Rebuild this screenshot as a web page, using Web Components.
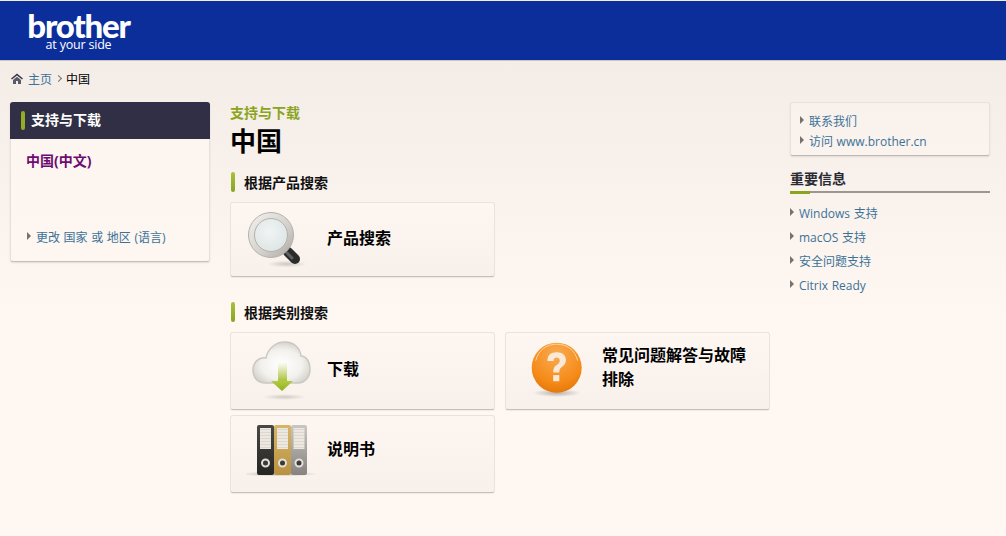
<!DOCTYPE html>
<html lang="zh-CN">
<head>
<meta charset="utf-8">
<title>Brother 支持与下载</title>
<style>
  html, body { margin: 0; height: 100%; }
  body {
    background: linear-gradient(#f3ece7 60px, #fff7f2 320px);
    font-family: "Open Sans", "Noto Sans CJK SC", sans-serif;
    font-size: 12px;
    color: #000;
    overflow: hidden;
  }
</style>
</head>
<body>
<site-header></site-header>
<bread-crumb current="中国">主页</bread-crumb>

<page-columns>
  <side-panel slot="left" title="支持与下载">
    <strong>中国(中文)</strong>
    <arrow-link slot="foot">更改 国家 或 地区 (语言)</arrow-link>
  </side-panel>

  <div slot="main">
    <page-title eyebrow="支持与下载">中国</page-title>

    <section-head gap="13">根据产品搜索</section-head>
    <card-grid>
      <nav-card h="75" lift="3">
        <svg slot="icon" width="70" height="66" viewBox="0 0 70 66">
          <defs>
            <radialGradient id="lens" cx=".45" cy=".4" r=".7"><stop offset="0" stop-color="#f0f5f4"/><stop offset="1" stop-color="#dbe3e2"/></radialGradient>
            <linearGradient id="ring" x1="0" y1="0" x2="1" y2="1"><stop offset="0" stop-color="#f4f2ef"/><stop offset=".6" stop-color="#d3d0cb"/><stop offset="1" stop-color="#a9a6a1"/></linearGradient>
            <radialGradient id="shade"><stop offset="0" stop-color="#a9a39e" stop-opacity=".55"/><stop offset="1" stop-color="#a9a39e" stop-opacity="0"/></radialGradient>
          </defs>
          <ellipse cx="41" cy="57" rx="20" ry="3.500" fill="url(#shade)"/>
          <line x1="36" y1="40" x2="43" y2="47" stroke="#8f8d89" stroke-width="5"/>
          <line x1="42" y1="45" x2="49" y2="52" stroke="#2b2b2a" stroke-width="10" stroke-linecap="round"/>
          <line x1="41" y1="46" x2="46" y2="51" stroke="#5f5f5d" stroke-width="3" stroke-linecap="round"/>
          <circle cx="25" cy="28" r="22.500" fill="url(#ring)" stroke="#b5b1ac"/>
          <circle cx="25" cy="28" r="16.500" fill="url(#lens)" stroke="#b5b2ad"/>
        </svg>
        产品搜索
      </nav-card>
    </card-grid>

    <section-head gap="25">根据类别搜索</section-head>
    <card-grid>
      <nav-card lift="4">
        <svg slot="icon" width="70" height="66" viewBox="0 0 70 66">
          <defs>
            <radialGradient id="cloud" cx=".5" cy=".55" r=".6"><stop offset="0" stop-color="#fff"/><stop offset=".6" stop-color="#f3f1ed"/><stop offset="1" stop-color="#cfccc6"/></radialGradient>
            <linearGradient id="shaft" x1="0" y1="0" x2="0" y2="1"><stop offset="0" stop-color="#b5cf45" stop-opacity="0"/><stop offset="1" stop-color="#a6c032"/></linearGradient>
            <linearGradient id="head" x1="0" y1="0" x2="0" y2="1"><stop offset="0" stop-color="#b3cb3e"/><stop offset="1" stop-color="#93ae22"/></linearGradient>
            <radialGradient id="shade2"><stop offset="0" stop-color="#a9a39e" stop-opacity=".5"/><stop offset="1" stop-color="#a9a39e" stop-opacity="0"/></radialGradient>
          </defs>
          <ellipse cx="38.500" cy="59" rx="22" ry="3" fill="url(#shade2)"/>
          <path d="M20 45C11 45 7 39 7 32 7 24 13 19 20 20 22 10 30 4 39 4 48 4 54 10 55 18 61 18 64 25 64 31 64 39 59 45 52 45Z" fill="url(#cloud)" stroke="#cbc8c1" stroke-width="1.500"/>
          <rect x="32" y="24" width="9" height="20" fill="url(#shaft)"/>
          <path d="M25 43H47L36 53Z" fill="url(#head)"/>
        </svg>
        下载
      </nav-card>
      <nav-card lift="8">
        <svg slot="icon" width="70" height="66" viewBox="0 0 70 66">
          <defs>
            <radialGradient id="ball" cx=".5" cy=".25" r=".85"><stop offset="0" stop-color="#f8ab52"/><stop offset=".65" stop-color="#f58a17"/><stop offset="1" stop-color="#dd6f05"/></radialGradient>
            <radialGradient id="shade3"><stop offset="0" stop-color="#8d8680" stop-opacity=".6"/><stop offset="1" stop-color="#8d8680" stop-opacity="0"/></radialGradient>
          </defs>
          <ellipse cx="35.700" cy="55" rx="24" ry="4" fill="url(#shade3)"/>
          <circle cx="35.700" cy="29.700" r="25" fill="url(#ball)"/>
          <path d="M14.700 22.700C17.700 11.700 25.700 6.200 35.700 6.200 45.700 6.200 53.700 11.700 56.700 22.700" fill="none" stroke="#fbd3a0" stroke-width="1"/>
          <g transform="translate(6.200 1) scale(.88)" fill="#fbe9d8">
            <path d="M23 25C23 18 27 15 33.500 15 40 15 44 18.500 44 24 44 28 42 30 39 32 37 33.500 36.500 35 36.500 38H29.500C29.500 33.500 30.500 31.500 33.500 29.500 36 28 37 26.500 37 24.500 37 22 35.500 21 33.500 21 31 21 30 22.500 30 25Z"/>
            <rect x="29.500" y="41" width="7" height="7"/>
          </g>
        </svg>
        常见问题解答与故障排除
      </nav-card>
      <nav-card lift="10">
        <svg slot="icon" width="70" height="66" viewBox="0 0 70 66">
          <defs>
            <linearGradient id="bk" x1="0" y1="0" x2="0" y2="1"><stop offset="0" stop-color="#4a4846"/><stop offset="1" stop-color="#262524"/></linearGradient>
            <linearGradient id="gd" x1="0" y1="0" x2="0" y2="1"><stop offset="0" stop-color="#d8b566"/><stop offset="1" stop-color="#b99240"/></linearGradient>
            <linearGradient id="gy" x1="0" y1="0" x2="0" y2="1"><stop offset="0" stop-color="#c9c7c4"/><stop offset="1" stop-color="#85827f"/></linearGradient>
            <radialGradient id="shade4"><stop offset="0" stop-color="#8d8680" stop-opacity=".55"/><stop offset="1" stop-color="#8d8680" stop-opacity="0"/></radialGradient>
            <pattern id="rule" width="4" height="3" patternUnits="userSpaceOnUse"><rect width="4" height="3" fill="#ece7df"/><rect y="2" width="4" height="1" fill="#dcd7cf"/></pattern>
          </defs>
          <ellipse cx="33" cy="53" rx="41" ry="2.500" fill="url(#shade4)"/>
          <rect x="11" y="4" width="17" height="50" rx="2" fill="url(#bk)"/>
          <rect x="28" y="4" width="17" height="50" rx="2" fill="url(#gd)"/>
          <rect x="45" y="4" width="16" height="50" rx="2" fill="url(#gy)"/>
          <g fill="url(#rule)">
            <rect x="14" y="7" width="11" height="21"/>
            <rect x="31" y="7" width="11" height="21"/>
            <rect x="47.500" y="7" width="11" height="21"/>
          </g>
          <g fill="#3b3a38" stroke="#e3e0db" stroke-width="2">
            <circle cx="19.500" cy="42" r="3.500"/>
            <circle cx="36.500" cy="42" r="3.500"/>
            <circle cx="53" cy="42" r="3.500"/>
          </g>
        </svg>
        说明书
      </nav-card>
    </card-grid>
  </div>

  <div slot="right">
    <link-box>
      <arrow-link>联系我们</arrow-link>
      <arrow-link>访问 www.brother.cn</arrow-link>
    </link-box>
    <info-list title="重要信息">
      <arrow-link>Windows 支持</arrow-link>
      <arrow-link>macOS 支持</arrow-link>
      <arrow-link>安全问题支持</arrow-link>
      <arrow-link>Citrix Ready</arrow-link>
    </info-list>
  </div>
</page-columns>

<script>
// small helper, every element below does the same thing in its constructor
function shadow(el, html) {
  el.attachShadow({ mode: 'open' }).innerHTML = html;
}

const CJK = '"Open Sans", "Noto Sans CJK SC", sans-serif';

class SiteHeader extends HTMLElement {
  constructor() {
    super();
    shadow(this, `
      <style>
        :host { display: block; margin-top: 1px; height: 59px; background: #0c2e9b; border-bottom: 1px solid #c9c6c4; box-sizing: content-box; }
        .logo { display: inline-flex; flex-direction: column; align-items: center; margin-left: 27px; color: #fff; width: 103px; }
        .name { font: 900 33px/26px Lato, sans-serif; letter-spacing: -1.2px; margin-top: 11px; white-space: nowrap; }
        .tag { font: 400 12.5px/14px "Open Sans", sans-serif; letter-spacing: -.2px; white-space: nowrap; }
      </style>
      <div class="logo"><span class="name">brother</span><span class="tag">at your side</span></div>`);
  }
}

class BreadCrumb extends HTMLElement {
  constructor() {
    super();
    shadow(this, `
      <style>
        :host { display: flex; align-items: center; height: 41px; padding: 0 0 6px 11px; box-sizing: border-box; font: 12px ${CJK}; }
        svg { margin-right: 5px; }
        a { color: #3a7298; }
        .sep { width: 4px; height: 4px; margin: 0 5px 0 4px; border: solid #77726e; border-width: 1px 1px 0 0; transform: rotate(45deg); }
      </style>
      <svg width="12" height="11" viewBox="0 0 12 11"><path d="M6 .5 0 5.500 1 6.500 6 2.500 11 6.500 12 5.500Z" fill="#3b3a48"/><path d="M2 7 6 3.700 10 7V11H7V8H5V11H2Z" fill="#5b5a68"/></svg>
      <a><slot></slot></a><span class="sep"></span><span id="cur"></span>`);
  }
  connectedCallback() {
    this.shadowRoot.getElementById('cur').textContent = this.getAttribute('current');
  }
}

class PageColumns extends HTMLElement {
  constructor() {
    super();
    shadow(this, `
      <style>
        :host { display: grid; grid-template-columns: 200px 540px 200px; column-gap: 20px; padding: 0 10px; align-items: start; }
      </style>
      <slot name="left"></slot><slot name="main"></slot><slot name="right"></slot>`);
  }
}

class SidePanel extends HTMLElement {
  constructor() {
    super();
    shadow(this, `
      <style>
        :host { height: 160px; background: linear-gradient(#fdf5f0, #fdf6f1); border: solid #e6dfda; border-width: 0 1px 1px; border-bottom-color: #c4bfba; border-radius: 3px; box-sizing: border-box; box-shadow: 0 1px 2px rgba(0,0,0,.1); display: flex; flex-direction: column; margin: 0; }
        .bar { margin: 0 -1px; height: 37px; padding: 0 0 3px 11px; box-sizing: border-box; background: #302f45; border-radius: 3px 3px 0 0; display: flex; align-items: center; color: #fff; font: 700 14px ${CJK}; }
        .bar i { width: 4px; height: 19px; margin: 3px 6px 0 0; border-radius: 2px; background: #93ae24; }
        .body { padding: 13px 15px 0; font: 700 14px/18px ${CJK}; color: #6d0c70; flex: 1; }
        .foot { padding: 0 0 15px 16px; }
        ::slotted(strong) { font-weight: 700; }
      </style>
      <div class="bar"><i></i><span id="t"></span></div>
      <div class="body"><slot></slot></div>
      <div class="foot"><slot name="foot"></slot></div>`);
  }
  connectedCallback() {
    this.shadowRoot.getElementById('t').textContent = this.getAttribute('title');
  }
}

class ArrowLink extends HTMLElement {
  constructor() {
    super();
    shadow(this, `
      <style>
        :host { display: flex; align-items: flex-start; font: 12px/16px ${CJK}; word-spacing: .5px; color: #3a7298; }
        i { flex: none; width: 0; height: 0; margin: 2px 5px 0 0; border: solid transparent; border-width: 4px 0 4px 4px; border-left-color: #77726e; }
      </style>
      <i></i><span><slot></slot></span>`);
  }
}

class PageTitle extends HTMLElement {
  constructor() {
    super();
    shadow(this, `
      <style>
        :host { display: block; font-family: ${CJK}; }
        .eyebrow { font: 700 14px/20px ${CJK}; color: #8ba420; margin-top: 1px; }
        h1 { margin: 0; font: 700 26px/36px ${CJK}; color: #000; }
      </style>
      <div class="eyebrow" id="e"></div>
      <h1><slot></slot></h1>`);
  }
  connectedCallback() {
    this.shadowRoot.getElementById('e').textContent = this.getAttribute('eyebrow');
  }
}

class SectionHead extends HTMLElement {
  constructor() {
    super();
    shadow(this, `
      <style>
        :host { display: flex; align-items: center; height: 20px; margin: 10px 0; font: 700 14px/20px ${CJK}; color: #111; }
        i { width: 4px; height: 20px; margin: 0 9px 0 1px; border-radius: 2px; background: linear-gradient(#a9c13c, #8aa31f); }
        span { padding-top: 1px; }
      </style>
      <i></i><span><slot></slot></span>`);
  }
  connectedCallback() {
    if (this.hasAttribute('gap')) this.style.marginTop = this.getAttribute('gap') + 'px';
  }
}

class CardGrid extends HTMLElement {
  constructor() {
    super();
    shadow(this, `
      <style>
        :host { display: grid; grid-template-columns: 265px 265px; gap: 5px 10px; }
      </style>
      <slot></slot>`);
  }
}

class NavCard extends HTMLElement {
  constructor() {
    super();
    shadow(this, `
      <style>
        :host { display: flex; align-items: center; box-sizing: border-box; height: 78px; padding-right: 20px; background: linear-gradient(#fdf6f1, #f7f0eb); border: 1px solid #e9e2dd; border-bottom-color: #c5c0bb; border-radius: 3px; box-shadow: 0 1px 1px rgba(0,0,0,.06); font: 700 16px/24px ${CJK}; color: #000; }
        .icon { flex: none; width: 96px; display: flex; padding-left: 15px; box-sizing: border-box; }
      </style>
      <div class="icon"><slot name="icon"></slot></div>
      <div id="label"><slot></slot></div>`);
  }
  connectedCallback() {
    if (this.hasAttribute('h')) this.style.height = this.getAttribute('h') + 'px';
    // the labels do not sit at the middle of the card, each is lifted a bit
    if (this.hasAttribute('lift')) this.shadowRoot.getElementById('label').style.paddingBottom = this.getAttribute('lift') + 'px';
  }
}

class LinkBox extends HTMLElement {
  constructor() {
    super();
    shadow(this, `
      <style>
        :host { display: flex; flex-direction: column; gap: 4px; box-sizing: border-box; height: 54px; padding: 11px 9px 0; background: linear-gradient(#f8f1ec, #fbf3ee); border: 1px solid #e8e1dc; border-bottom-color: #bdb8b3; border-radius: 3px; box-shadow: 0 1px 2px rgba(0,0,0,.1); }
      </style>
      <slot></slot>`);
  }
}

class InfoList extends HTMLElement {
  constructor() {
    super();
    shadow(this, `
      <style>
        :host { display: block; margin-top: 14px; }
        h2 { margin: 0; height: 21px; font: 700 14px/18px ${CJK}; color: #2a2a33; border-bottom: 2px solid #9b9691; position: relative; }
        h2::after { content: ""; position: absolute; left: 0; bottom: -3px; width: 20px; height: 3px; background: #8ba420; }
        .items { display: flex; flex-direction: column; gap: 8px; padding-top: 13px; }
      </style>
      <h2 id="t"></h2>
      <div class="items"><slot></slot></div>`);
  }
  connectedCallback() {
    this.shadowRoot.getElementById('t').textContent = this.getAttribute('title');
  }
}

customElements.define('site-header', SiteHeader);
customElements.define('bread-crumb', BreadCrumb);
customElements.define('page-columns', PageColumns);
customElements.define('side-panel', SidePanel);
customElements.define('arrow-link', ArrowLink);
customElements.define('page-title', PageTitle);
customElements.define('section-head', SectionHead);
customElements.define('card-grid', CardGrid);
customElements.define('nav-card', NavCard);
customElements.define('link-box', LinkBox);
customElements.define('info-list', InfoList);
</script>
</body>
</html>
